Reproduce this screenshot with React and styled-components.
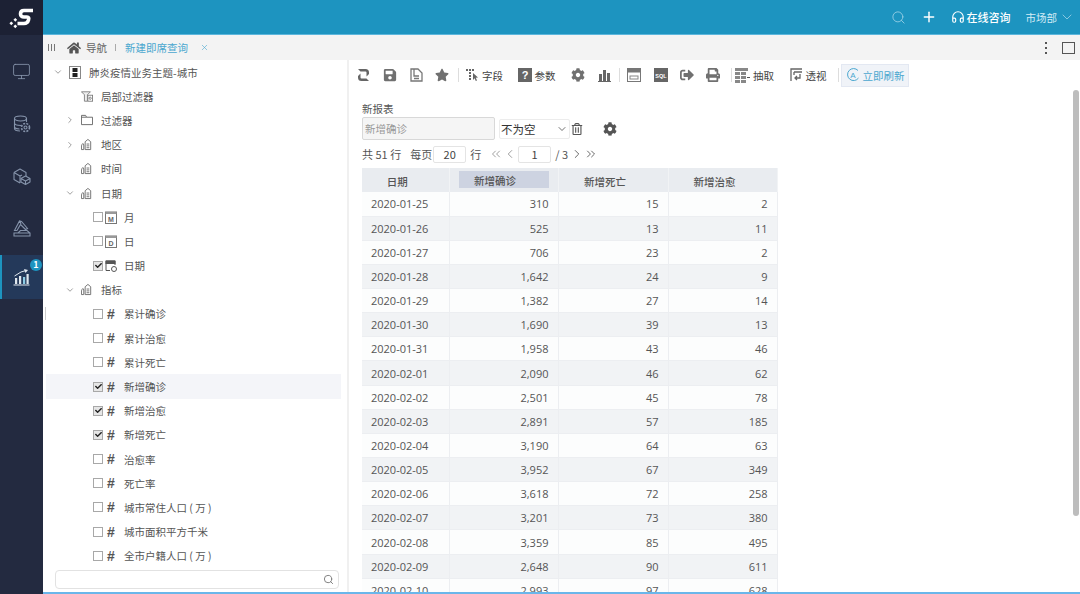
import React from 'react';
import styled, { createGlobalStyle } from 'styled-components';
import { FaHome, FaSave, FaStar, FaCog, FaPrint, FaSignOutAlt, FaRegTrashAlt, FaCheck } from 'react-icons/fa';
import {
  Search, Plus, Headphones, ChevronDown, ChevronRight, X, Monitor,
  ChevronLeft, ChevronsLeft, ChevronsRight
} from 'lucide-react';

const Global = createGlobalStyle`
  html, body { margin: 0; padding: 0; height: 594px; overflow: hidden; background: #fff; }
  body { font-family: "Noto Sans CJK SC", "Open Sans", sans-serif; font-size: 10.5px; color: #555; }
  * { box-sizing: border-box; }
`;

/* ================= SHELL ================= */

const Shell = styled.div`
  display: grid;
  grid-template-columns: 43px 1fr;
  width: 1080px;
  height: 594px;
  overflow: hidden;
`;

const Side = styled.aside`
  background: #232a40;
  display: flex;
  flex-direction: column;
`;

const LogoBox = styled.div`
  height: 35px;
  background: #1c2134;
  display: flex;
  align-items: center;
  justify-content: center;
`;

const NavList = styled.nav`
  padding-top: 10px;
  display: flex;
  flex-direction: column;
`;

const NavItem = styled.div`
  position: relative;
  height: ${({ $active }) => ($active ? '44px' : '52.5px')};
  display: flex;
  align-items: center;
  justify-content: center;
  color: #8593aa;
  background: ${({ $active }) => ($active ? '#24395a' : 'transparent')};
  border-left: 2px solid ${({ $active }) => ($active ? '#1d94c0' : 'transparent')};
  padding-right: 2px;
`;

const Badge = styled.span`
  position: absolute;
  top: 4px;
  right: 1px;
  width: 12px;
  height: 12px;
  border-radius: 50%;
  background: #1d94c0;
  color: #fff;
  font-size: 9px;
  font-weight: 700;
  line-height: 12px;
  text-align: center;
`;

const Main = styled.div`
  position: relative;
  display: flex;
  flex-direction: column;
  min-width: 0;
  height: 594px;
  border-bottom: 2px solid #6ab6ea;
`;

/* ================= TOP BAR ================= */

const TopBar = styled.header`
  height: 35px;
  flex: none;
  background: #1d94c0;
  border-bottom: 1px solid #5cb6dc;
  display: flex;
  align-items: center;
  justify-content: flex-end;
  color: #fff;
`;

const TopIcon = styled.span`
  display: flex;
  color: ${({ $dim }) => ($dim ? '#a3d4e8' : '#fff')};
  margin-right: ${({ $gap }) => $gap}px;
`;

const Consult = styled.span`
  font-size: 11px;
  font-weight: 500;
  margin-right: 15px;
`;

const Dept = styled.span`
  font-size: 10.5px;
  color: #d4ecf6;
  margin-right: 2px;
`;

const TabBar = styled.div`
  height: 25px;
  flex: none;
  background: #f3f3f3;
  display: flex;
  align-items: center;
  padding-left: 5px;
`;

const Grip = styled.span`
  width: 7px;
  height: 7px;
  margin-right: 12px;
  border-left: 1px solid #777;
  border-right: 1px solid #777;
  position: relative;
  &::after {
    content: '';
    position: absolute;
    left: 2px;
    top: 0;
    bottom: 0;
    width: 1px;
    background: #777;
  }
`;

const TabText = styled.span`
  color: ${({ $current }) => ($current ? '#4aa7cf' : '#666')};
`;

const TabSep = styled.span`
  width: 1px;
  height: 7px;
  background: #aaa;
  margin: 0 9px 0 8px;
`;

const TabRight = styled.div`
  margin-left: auto;
  display: flex;
  align-items: center;
  padding-right: 5px;
`;

const Kebab = styled.span`
  display: flex;
  flex-direction: column;
  gap: 3px;
  margin-right: 15px;
  & > i {
    width: 2px;
    height: 2px;
    background: #555;
    display: block;
  }
`;

const Maximize = styled.span`
  width: 13px;
  height: 12px;
  border: 1.5px solid #555;
`;

/* ================= TREE ================= */

const Body = styled.div`
  flex: 1;
  min-height: 0;
  display: flex;
`;

const Left = styled.section`
  width: 306px;
  flex: none;
  display: flex;
  flex-direction: column;
  border-right: 2px solid #f0f0f0;
  padding: 0 6px 0 3px;
  position: relative;
`;

const Sash = styled.span`
  position: absolute;
  left: 2px;
  top: 247px;
  width: 1px;
  height: 13px;
  background: #ccc;
`;

const Tree = styled.div`
  flex: 1;
  min-height: 0;
`;

const Row = styled.div`
  height: 24.2px;
  display: flex;
  align-items: center;
  padding-left: ${({ $level }) => [7, 19, 47][$level]}px;
  background: ${({ $hot }) => ($hot ? '#f4f5f9' : 'transparent')};
`;

const Caret = styled.span`
  width: 10px;
  margin-right: 6px;
  display: flex;
  justify-content: center;
  color: #666;
`;

const NodeIcon = styled.span`
  width: 12px;
  height: 13px;
  display: flex;
  align-items: center;
  justify-content: center;
  margin-right: ${({ $gap }) => $gap}px;
  color: #666;
`;

const Box = styled.span`
  width: 10px;
  height: 10px;
  margin-right: 2px;
  border: 1px solid #a8a8a8;
  background: ${({ $on }) => ($on ? '#e6e6e6' : '#fff')};
  display: flex;
  align-items: center;
  justify-content: center;
  color: #222;
`;

const Hash = styled.span`
  width: 12px;
  margin-right: 7px;
  text-align: center;
  color: #555;
  font-size: 14px;
  line-height: 1;
  font-weight: 700;
  font-family: "Liberation Sans", sans-serif;
`;

const SearchBox = styled.div`
  flex: none;
  height: 19px;
  margin: 0 2px 3px 9px;
  border: 1px solid #e2e2e2;
  border-radius: 4px;
  display: flex;
  align-items: center;
  justify-content: flex-end;
  padding-right: 4px;
  color: #777;
`;

/* ================= REPORT ================= */

const Right = styled.section`
  flex: 1;
  min-width: 0;
  padding-left: 13px;
  overflow: hidden;
  position: relative;
`;

const Scroll = styled.span`
  position: absolute;
  right: 1px;
  top: 30px;
  width: 6px;
  height: 426px;
  border-radius: 3px;
  background: #bdbdbd;
`;

const Toolbar = styled.div`
  height: 30px;
  margin-left: -12px;
  display: flex;
  align-items: center;
  color: #666;
`;

const Tool = styled.span`
  width: ${({ $w }) => $w}px;
  flex: none;
  display: flex;
  align-items: center;
  justify-content: ${({ $start }) => ($start ? 'flex-start' : 'center')};
  gap: 3px;
  color: #444;
  & > svg { color: #707070; flex: none; }
`;

const ToolSep = styled.span`
  width: 1px;
  height: 14px;
  flex: none;
  background: #ddd;
  margin: 0 ${({ $r }) => $r}px 0 ${({ $l }) => $l}px;
`;

const RefreshBtn = styled.span`
  width: 68px;
  height: 23px;
  flex: none;
  margin-left: -3px;
  background: #f0f3f8;
  border: 1px solid #e3e8f2;
  display: flex;
  align-items: center;
  justify-content: center;
  gap: 3px;
  color: #4aa7cf;
`;

const ReportName = styled.div`
  margin-top: 10px;
  height: 17px;
  line-height: 17px;
  color: #555;
`;

const FilterRow = styled.div`
  height: 23px;
  display: flex;
  align-items: center;
`;

const FilterInput = styled.div`
  width: 133px;
  height: 23px;
  background: #f5f5f5;
  border: 1px solid #d8d8d8;
  border-radius: 2px;
  color: #999;
  line-height: 21px;
  padding-left: 2px;
  margin-right: 4px;
`;

const FilterSelect = styled.div`
  width: 71px;
  height: 20px;
  border-radius: 2px;
  border: 1px solid #ececec;
  background: #fff;
  display: flex;
  align-items: center;
  justify-content: space-between;
  font-size: 11.5px;
  color: #333;
  padding: 0 1px;
  margin-right: 1px;
`;

const IconBtn = styled.span`
  display: flex;
  color: #555;
  margin-right: ${({ $gap }) => $gap || 0}px;
`;

const Pager = styled.div`
  height: 28px;
  display: flex;
  align-items: center;
  color: #555;
  font-size: 11px;
  line-height: 1;
`;

const PagerGap = styled.span`
  width: ${({ $w }) => $w}px;
  flex: none;
`;

const PageInput = styled.span`
  width: 33px;
  height: 17px;
  border: 1px solid #e4e4e4;
  border-radius: 2px;
  display: flex;
  align-items: center;
  justify-content: center;
  color: #444;
  margin: ${({ $m }) => $m};
`;

const PageArrow = styled.span`
  display: flex;
  color: ${({ $muted }) => ($muted ? '#8a8a8a' : '#555')};
`;

const Table = styled.table`
  border-collapse: collapse;
  table-layout: fixed;
  width: 415px;
`;

const Th = styled.th`
  width: ${({ $w }) => $w}px;
  height: 24px;
  background: #e9ecf0;
  border-right: 1px solid #f1f3f5;
  font-weight: 500;
  font-size: 10.5px;
  color: #555;
  padding: 2px 16px 0 0;
`;

const HotLabel = styled.span`
  display: block;
  margin: -3px -7px 0 9px;
  padding-right: 17px;
  height: 17px;
  line-height: 19px;
  background: #cdd3e1;
`;

const Tr = styled.tr`
  background: ${({ $alt }) => ($alt ? '#f1f3f5' : '#fcfdfd')};
`;

const Td = styled.td`
  height: 24.15px;
  padding: 0 ${({ $date }) => ($date ? '0 0 9px' : '9px 0 0')};
  text-align: ${({ $date }) => ($date ? 'left' : 'right')};
  border-right: 1px solid #eceef1;
  border-bottom: 1px solid #eceef1;
  font-family: "Open Sans", "Noto Sans CJK SC", sans-serif;
  font-size: 11px;
  color: #555;
`;

/* ================= DRAWN ICONS ================= */

const Logo = () => (
  <svg width="28" height="24" viewBox="0 0 28 24">
    <path d="M25 4.500H16Q12.500 4.500 12.500 8Q12.500 11 16 11H19Q21.500 11 20.500 14Q19.500 17.500 16 17.500H9.500" fill="none" stroke="#fff" strokeWidth="3.600" />
    <rect x="6" y="12.500" width="2.600" height="2.600" fill="#fff" transform="rotate(45 7.300 13.800)" />
    <rect x="2" y="16" width="2.600" height="2.600" fill="#fff" transform="rotate(45 3.300 17.300)" />
    <rect x="6" y="19" width="2.600" height="2.600" fill="#fff" transform="rotate(45 7.300 20.300)" />
  </svg>
);

const DbGear = () => (
  <svg width="18" height="18" viewBox="0 0 18 18" fill="none" stroke="currentColor" strokeWidth="1.100">
    <ellipse cx="7.500" cy="3.500" rx="6" ry="2.500" />
    <path d="M1.500 3.500V13.500C1.500 15 4 16 7 16M1.500 8C1.500 9.500 4 10.500 8 10.500M1.500 12.500C2.500 13.500 4 14 6.500 14M13.500 3.500V7" />
    <circle cx="12.500" cy="12.500" r="1.500" />
    <circle cx="12.500" cy="12.500" r="4" strokeDasharray="2 1.200" strokeWidth="1.600" />
  </svg>
);

const CubeStack = () => (
  <svg width="18" height="17" viewBox="0 0 18 17" fill="none" stroke="currentColor" strokeWidth="1.100" strokeLinejoin="round">
    <path d="M1 4.500L7 1L13 4.500V8M1 4.500V11.500L7 15M1 4.500L7 8L9 6.900M7 8V15" />
    <path d="M8 10.500L12.500 8L17 10.500V14L12.500 16.500L8 14ZM8 10.500L12.500 13L17 10.500M12.500 13V16.500" />
  </svg>
);

const PenRuler = () => (
  <svg width="18" height="17" viewBox="0 0 18 17" fill="none" stroke="currentColor" strokeWidth="1.100">
    <path d="M1 16H17V13L14 10.500H7.500L5 13H1ZM1 13H5M5 13H17" />
    <path d="M1.500 10.500L6.500 1L8.500 1.500L14.500 8.500L12.500 9.500L7.500 4.500L4 10.500ZM7 1.500L8 4" />
  </svg>
);

const ChartIcon = () => (
  <svg width="17" height="17" viewBox="0 0 17 17" fill="#dfe7ee">
    <rect x="2" y="9" width="2.200" height="6" />
    <rect x="6" y="7" width="2.200" height="8" />
    <rect x="10" y="8" width="2.200" height="7" fill="#8ccbe4" />
    <rect x="13.500" y="5" width="2.200" height="10" />
    <rect x="0.500" y="15.500" width="16" height="1" />
    <path d="M1.500 7L8 3L13 1.500" fill="none" stroke="#dfe7ee" />
    <path d="M11 0L15 1L12.500 4Z" />
  </svg>
);

const Refresh = () => (
  <svg width="13" height="14" viewBox="0 0 13 14" fill="#666">
    <path d="M1 1H8.500Q12 1 12 4.500V6L9.500 8.500V4.500Q9.500 3.500 8.500 3.500H3.500Z" />
    <path d="M12 13H4.500Q1 13 1 9.500V8L3.500 5.500V9.500Q3.500 10.500 4.500 10.500H9.500Z" />
  </svg>
);

const DocIcon = () => (
  <svg width="13" height="14" viewBox="0 0 13 14" fill="none" stroke="#777" strokeWidth="1.300">
    <path d="M1 1H8L12 5V13H1ZM4 1V8H9M4 10.500H9" />
  </svg>
);

const Dim = () => (
  <svg width="13" height="13" viewBox="0 0 13 13" fill="none" stroke="#6d6d6d" strokeWidth="1">
    <path d="M0.500 8Q2 3.500 3 7V12H0.500ZM4.500 12V3.500L7.500 1L10.500 3.500V12Z" />
    <path d="M6 6H9M6 8H9M6 10H9" />
  </svg>
);

const Funnel = () => (
  <svg width="14" height="13" viewBox="0 0 14 13" fill="none" stroke="#777" strokeWidth="1">
    <path d="M0.500 1H11L7.500 4.500V12H4V4.500Z" fill="#eee" />
    <rect x="8" y="5" width="5.500" height="7" fill="#fff" />
    <circle cx="10.700" cy="8.500" r="1.300" />
  </svg>
);

const Folder = () => (
  <svg width="13" height="12" viewBox="0 0 13 12" fill="none" stroke="#666" strokeWidth="1">
    <path d="M0.500 1H5L6 3H12.500V11H0.500ZM0.500 3H6" />
  </svg>
);

const Cube = () => (
  <svg width="12" height="13" viewBox="0 0 12 13">
    <rect x="0.500" y="0.500" width="11" height="12" fill="#fff" stroke="#888" />
    <rect x="3.500" y="2" width="5" height="4" fill="#222" />
    <rect x="3.500" y="7" width="5" height="4" fill="#222" />
  </svg>
);

const Cal = ({ children }) => (
  <svg width="12" height="13" viewBox="0 0 12 13">
    <rect x="0.500" y="1" width="11" height="11.500" fill="#fff" stroke="#777" />
    <rect x="0.500" y="1" width="11" height="2" fill="#999" />
    <text x="6" y="10.500" fontSize="7" fontWeight="700" textAnchor="middle" fill="#666" fontFamily="Liberation Sans">{children}</text>
  </svg>
);

const CalClock = () => (
  <svg width="12" height="13" viewBox="0 0 12 13" fill="none" stroke="#555">
    <path d="M5 11.500H1V2H10V6" />
    <rect x="1" y="2" width="9" height="2.500" fill="#555" />
    <circle cx="9" cy="10" r="2.500" fill="#fff" />
  </svg>
);

const FieldIcon = () => (
  <svg width="13" height="14" viewBox="0 0 13 14" fill="#666">
    <rect x="0" y="1" width="2" height="2" /><rect x="3" y="1" width="2" height="2" /><rect x="6" y="1" width="2" height="2" />
    <rect x="3" y="4" width="2" height="2" /><rect x="3" y="7" width="2" height="2" /><rect x="3" y="10" width="2" height="2" />
    <path d="M7 5L12 9.500L9.800 9.800L11 12.500L9.800 13L8.600 10.300L7 12Z" />
  </svg>
);

const ParamIcon = () => (
  <svg width="14" height="14" viewBox="0 0 14 14">
    <rect width="14" height="14" fill="#666" />
    <text x="7" y="11" fontSize="11" fontWeight="700" textAnchor="middle" fill="#fff" fontFamily="Liberation Sans">?</text>
  </svg>
);

const BarsIcon = () => (
  <svg width="13" height="13" viewBox="0 0 13 13" fill="#666">
    <rect x="1" y="5" width="3" height="7" /><rect x="5" y="1" width="3" height="11" /><rect x="9" y="4" width="3" height="8" />
    <rect x="0" y="12" width="13" height="1" />
  </svg>
);

const PanelIcon = () => (
  <svg width="14" height="14" viewBox="0 0 14 14">
    <rect x="0.500" y="0.500" width="13" height="13" fill="#fff" stroke="#777" />
    <rect x="0.500" y="0.500" width="13" height="4" fill="#777" />
    <rect x="3" y="8" width="8" height="3" fill="none" stroke="#888" />
  </svg>
);

const SqlIcon = () => (
  <svg width="14" height="14" viewBox="0 0 14 14">
    <rect width="14" height="14" fill="#666" />
    <text x="7" y="9.500" fontSize="5.500" fontWeight="700" textAnchor="middle" fill="#fff" fontFamily="Liberation Sans">SQL</text>
  </svg>
);

const ExtractIcon = () => (
  <svg width="15" height="15" viewBox="0 0 15 15" fill="#888">
    <path d="M0 0H13V3H0ZM0 4H5V7H0ZM0 8H5V11H0ZM0 12H5V15H0ZM6 4H11V7H6ZM6 8H11V11H6ZM6 12H11V15H6Z" />
    <path d="M12 9H15V10H12Z" fill="#555" />
  </svg>
);

const PivotIcon = () => (
  <svg width="13" height="14" viewBox="0 0 13 14" fill="none" stroke="#666" strokeWidth="1.300">
    <path d="M1 13V1H12M4 4H12M4 4V7M10 6V10H5M7 8L5 10L7 12" />
  </svg>
);

const AutoIcon = () => (
  <svg width="14" height="14" viewBox="0 0 14 14" fill="none" stroke="#4aa7cf" strokeWidth="1">
    <path d="M12 2.500A6 6 0 1 0 12.500 10" />
    <text x="7" y="10" fontSize="8" textAnchor="middle" fill="#4aa7cf" stroke="none" fontFamily="Liberation Sans">A</text>
  </svg>
);

/* ================= DATA ================= */

const tree = [
  { level: 0, open: true, icon: <Cube />, label: '肺炎疫情业务主题-城市' },
  { level: 1, icon: <Funnel />, label: '局部过滤器' },
  { level: 1, closed: true, icon: <Folder />, label: '过滤器' },
  { level: 1, closed: true, icon: <Dim />, label: '地区' },
  { level: 1, icon: <Dim />, label: '时间' },
  { level: 1, open: true, icon: <Dim />, label: '日期' },
  { level: 2, icon: <Cal>M</Cal>, label: '月' },
  { level: 2, icon: <Cal>D</Cal>, label: '日' },
  { level: 2, on: true, icon: <CalClock />, label: '日期' },
  { level: 1, open: true, icon: <Dim />, label: '指标' },
  { level: 2, hash: true, label: '累计确诊' },
  { level: 2, hash: true, label: '累计治愈' },
  { level: 2, hash: true, label: '累计死亡' },
  { level: 2, hash: true, on: true, hot: true, label: '新增确诊' },
  { level: 2, hash: true, on: true, label: '新增治愈' },
  { level: 2, hash: true, on: true, label: '新增死亡' },
  { level: 2, hash: true, label: '治愈率' },
  { level: 2, hash: true, label: '死亡率' },
  { level: 2, hash: true, label: '城市常住人口 ( 万 )' },
  { level: 2, hash: true, label: '城市面积平方千米' },
  { level: 2, hash: true, label: '全市户籍人口 ( 万 )' },
];

const rows = [
  ['2020-01-25', '310', '15', '2'],
  ['2020-01-26', '525', '13', '11'],
  ['2020-01-27', '706', '23', '2'],
  ['2020-01-28', '1,642', '24', '9'],
  ['2020-01-29', '1,382', '27', '14'],
  ['2020-01-30', '1,690', '39', '13'],
  ['2020-01-31', '1,958', '43', '46'],
  ['2020-02-01', '2,090', '46', '62'],
  ['2020-02-02', '2,501', '45', '78'],
  ['2020-02-03', '2,891', '57', '185'],
  ['2020-02-04', '3,190', '64', '63'],
  ['2020-02-05', '3,952', '67', '349'],
  ['2020-02-06', '3,618', '72', '258'],
  ['2020-02-07', '3,201', '73', '380'],
  ['2020-02-08', '3,359', '85', '495'],
  ['2020-02-09', '2,648', '90', '611'],
  ['2020-02-10', '2,993', '97', '628'],
];

function TreeRow({ node }) {
  return (
    <Row $level={node.level} $hot={node.hot}>
      {node.level < 2 && (
        <Caret>
          {node.open && <ChevronDown size={10} strokeWidth={1.5} />}
          {node.closed && <ChevronRight size={10} strokeWidth={1.5} />}
        </Caret>
      )}
      {node.level === 2 && <Box $on={node.on}>{node.on && <FaCheck size={7} />}</Box>}
      {node.hash
        ? <Hash>#</Hash>
        : <NodeIcon $gap={node.level === 2 ? 7 : 8}>{node.icon}</NodeIcon>}
      <span>{node.label}</span>
    </Row>
  );
}

export default function App() {
  return (
    <Shell>
      <Global />

      {/* SIDEBAR */}
      <Side>
        <LogoBox><Logo /></LogoBox>
        <NavList>
          <NavItem><Monitor size={19} strokeWidth={1.1} /></NavItem>
          <NavItem><DbGear /></NavItem>
          <NavItem><CubeStack /></NavItem>
          <NavItem><PenRuler /></NavItem>
          <NavItem $active><ChartIcon /><Badge>1</Badge></NavItem>
        </NavList>
      </Side>

      <Main>
        {/* HEADER */}
        <TopBar>
          <TopIcon $dim $gap={15}><Search size={15} strokeWidth={1.3} /></TopIcon>
          <TopIcon $gap={14}><Plus size={16} strokeWidth={2.2} /></TopIcon>
          <TopIcon $gap={2}><Headphones size={14} strokeWidth={2} /></TopIcon>
          <Consult>在线咨询</Consult>
          <Dept>市场部</Dept>
          <TopIcon $dim $gap={5}><ChevronDown size={16} strokeWidth={1.2} /></TopIcon>
        </TopBar>

        <TabBar>
          <Grip />
          <FaHome size={14} color="#555" style={{ marginRight: 5 }} />
          <TabText>导航</TabText>
          <TabSep />
          <TabText $current>新建即席查询</TabText>
          <X size={9} color="#4aa7cf" strokeWidth={1.6} style={{ marginLeft: 12 }} />
          <TabRight>
            <Kebab><i /><i /><i /></Kebab>
            <Maximize />
          </TabRight>
        </TabBar>

        <Body>
          {/* TREE */}
          <Left>
            <Sash />
            <Tree>
              {tree.map((node, i) => <TreeRow key={i} node={node} />)}
            </Tree>
            <SearchBox><Search size={11} /></SearchBox>
          </Left>

          {/* REPORT */}
          <Right>
            <Scroll />
            <Toolbar>
              <Tool $w={26}><Refresh /></Tool>
              <Tool $w={27}><FaSave size={14} /></Tool>
              <Tool $w={26}><DocIcon /></Tool>
              <Tool $w={26}><FaStar size={14} /></Tool>
              <ToolSep $l={3} $r={7} />
              <Tool $w={42} $start><FieldIcon />字段</Tool>
              <Tool $w={57}><ParamIcon />参数</Tool>
              <Tool $w={26}><FaCog size={14} /></Tool>
              <Tool $w={27}><BarsIcon /></Tool>
              <ToolSep $l={1} $r={0} />
              <Tool $w={27}><PanelIcon /></Tool>
              <Tool $w={27}><SqlIcon /></Tool>
              <Tool $w={26}><FaSignOutAlt size={14} /></Tool>
              <Tool $w={26}><FaPrint size={14} /></Tool>
              <ToolSep $l={5} $r={3} />
              <Tool $w={47} $start><ExtractIcon />抽取</Tool>
              <Tool $w={52}><PivotIcon />透视</Tool>
              <ToolSep $l={4} $r={5} />
              <RefreshBtn><AutoIcon />立即刷新</RefreshBtn>
            </Toolbar>

            <ReportName>新报表</ReportName>
            <FilterRow>
              <FilterInput>新增确诊</FilterInput>
              <FilterSelect>不为空<ChevronDown size={12} strokeWidth={1.4} /></FilterSelect>
              <IconBtn $gap={20}><FaRegTrashAlt size={12} /></IconBtn>
              <IconBtn><FaCog size={14} /></IconBtn>
            </FilterRow>

            <Pager>
              共 51 行
              <PagerGap $w={9} />
              每页
              <PageInput $m="0 4px 0 1px">20</PageInput>
              行
              <PagerGap $w={8} />
              <PageArrow $muted><ChevronsLeft size={14} strokeWidth={1.4} /></PageArrow>
              <PageArrow $muted><ChevronLeft size={14} strokeWidth={1.4} /></PageArrow>
              <PageInput $m="0 4px 0 1px">1</PageInput>
              / 3
              <PagerGap $w={2} />
              <PageArrow><ChevronRight size={14} strokeWidth={1.5} /></PageArrow>
              <PageArrow><ChevronsRight size={14} strokeWidth={1.5} /></PageArrow>
            </Pager>

            <Table>
              <thead>
                <tr>
                  <Th $w={87}>日期</Th>
                  <Th $w={109}><HotLabel>新增确诊</HotLabel></Th>
                  <Th $w={110}>新增死亡</Th>
                  <Th $w={109}>新增治愈</Th>
                </tr>
              </thead>
              <tbody>
                {rows.map((r, i) => (
                  <Tr key={r[0]} $alt={i % 2 === 1}>
                    <Td $date>{r[0]}</Td>
                    <Td>{r[1]}</Td>
                    <Td>{r[2]}</Td>
                    <Td>{r[3]}</Td>
                  </Tr>
                ))}
              </tbody>
            </Table>
          </Right>
        </Body>
      </Main>
    </Shell>
  );
}
